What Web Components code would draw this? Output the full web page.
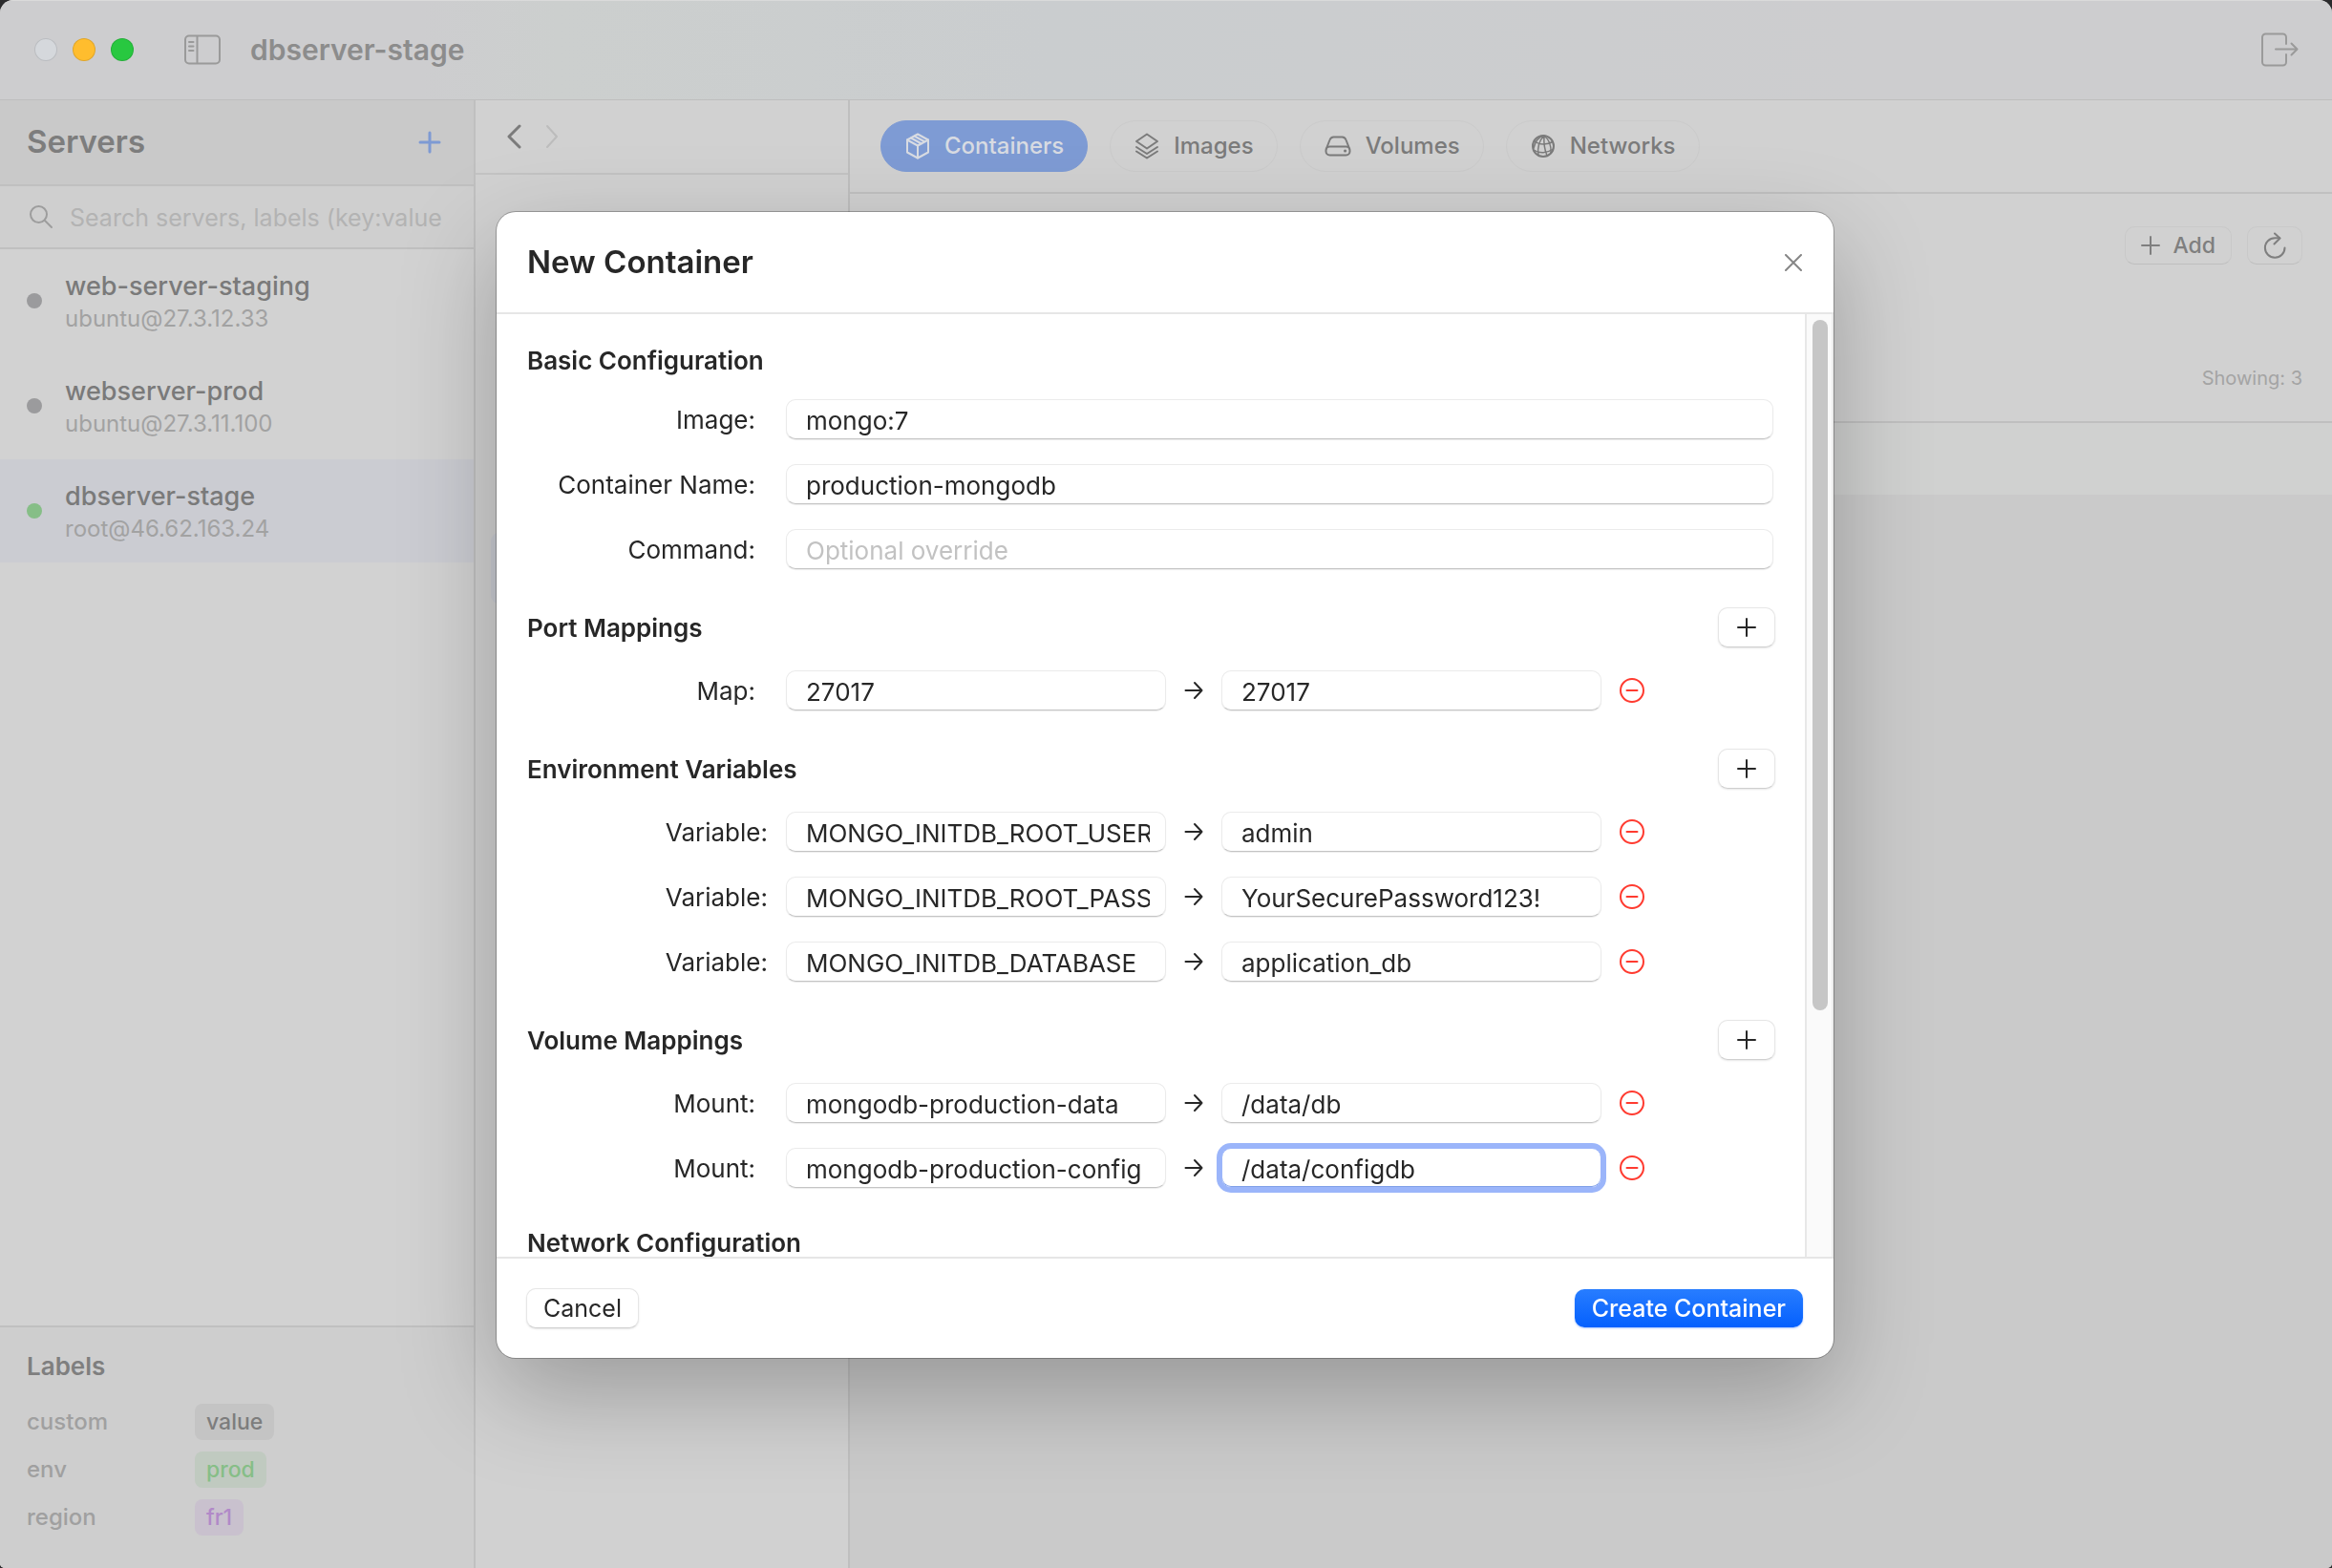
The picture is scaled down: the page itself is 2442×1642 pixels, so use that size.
<!DOCTYPE html>
<html lang="en">
<head>
<meta charset="utf-8">
<title>dbserver-stage</title>
<style>
  html, body { margin: 0; height: 100%; }
  body { background: #2b2b2d; font-family: Inter, "Noto Sans", sans-serif; font-size: 26px; line-height: 34px; color: #7d7d7d; overflow: hidden; }
</style>
</head>
<body>
<app-window></app-window>
<script>
const define = (name, html, init) => {
  const template = document.createElement('template');
  template.innerHTML = `<style>
    *, *::before, *::after { box-sizing: border-box; }
    button, input { font: inherit; color: inherit; margin: 0; }
    button { border: 0; background: none; padding: 0; display: inline-flex; align-items: center; justify-content: center; }
    h1, h2, h3, p, ul, dl, dd, dt { margin: 0; padding: 0; font: inherit; }
    a { color: inherit; text-decoration: none; }
    input { outline: none; }
  </style>` + html;
  customElements.define(name, class extends HTMLElement {
    constructor() {
      super();
      this.attachShadow({ mode: 'open' }).append(template.content.cloneNode(true));
    }
    connectedCallback() { if (init) init(this.shadowRoot, this); }
  });
};

/* Each icon: width, height, stroke width, markup */
const ICONS = {
  plus: [24, 24, 3, '<path d="M12 2v20M2 12h20"/>'],
  'plus-thin': [20, 20, 2, '<path d="M10 1v18M1 10h18"/>'],
  close: [18, 18, 2, '<path d="M1 1l16 16M17 1L1 17"/>'],
  sidebar: [40, 32, 2, '<rect x="2" y="1.500" width="36" height="29" rx="4"/><path d="M14.500 2v28M6 8h4.500M6 12.500h4.500M6 17h4.500"/>'],
  exit: [40, 36, 2, '<path d="M27 12V5a3.500 3.500 0 0 0-3.500-3.500h-18A3.500 3.500 0 0 0 2 5v26a3.500 3.500 0 0 0 3.500 3.500h18A3.500 3.500 0 0 0 27 31v-8"/><path d="M16 17.500h22M32.500 11.500l6 6-6 6"/>'],
  search: [26, 26, 2, '<circle cx="10.500" cy="10.500" r="8.500"/><path d="M17 17l7 7"/>'],
  back: [16, 26, 3, '<path d="M14 2L3 13l11 11"/>'],
  forward: [16, 26, 2, '<path d="M3 2l10 11L3 24"/>'],
  box: [26, 28, 2, '<path d="M13 1.500l11 6v13l-11 6-11-6v-13z"/><path d="M2 7.500l11 6 11-6M13 13.500v13M9.500 3.500l11 6M6 5.500l11 6"/>'],
  layers: [26, 28, 2, '<path d="M13 1.500l11 7.500-11 7.500L2 9z"/><path d="M2 15l11 7 11-7M2 19.500l11 7 11-7"/>'],
  drive: [28, 22, 2, '<path d="M1.800 14L5.500 4.500A4.500 4.500 0 0 1 9.500 1.500h9a4.500 4.500 0 0 1 4 3L26.200 14"/><rect x="1.500" y="11.500" width="25" height="9" rx="4"/><path d="M21.500 16h.1" stroke-width="3"/>'],
  globe: [26, 26, 2, '<circle cx="13" cy="13" r="11"/><g stroke-width="1.500"><path d="M14 2C9 7 6.500 13 8 22.500M14 2c-.500 7 .500 15 3 21M14 2c5 4 7.500 10 7 18M14 2C9 3 5 7 3 15"/><path d="M4 8c5 4 13 4 19 .500M3 17c6 4 14 3.500 20.500-1"/></g>'],
  refresh: [24, 28, 2, '<path d="M22.500 16.500A10.300 10.300 0 1 1 12.200 6.200h5"/><path d="M12 1.500l5.500 5-6 6"/>'],
  arrow: [20, 20, 2, '<path d="M1.500 10h17M11 2l7.500 8L11 18"/>'],
  remove: [28, 28, 2, '<circle cx="14" cy="14" r="12"/><path d="M8.500 14h11"/>']
};
define('app-icon', `<style>
  :host { display: inline-flex; flex: none; }
  svg { display: block; fill: none; stroke: currentColor; stroke-linecap: round; stroke-linejoin: round; }
</style><svg aria-hidden="true"></svg>`, (root, host) => {
  const [w, h, s, body] = ICONS[host.getAttribute('name')];
  const svg = root.querySelector('svg');
  svg.setAttribute('viewBox', `0 0 ${w} ${h}`);
  svg.setAttribute('width', w);
  svg.setAttribute('height', h);
  svg.setAttribute('stroke-width', s);
  svg.innerHTML = body;
});

define('title-bar', `<style>
  :host { display: flex; align-items: center; height: 105px; padding: 0 35px 2px 36px; flex: none;
    background: linear-gradient(90deg, #cdcdcf 18%, #cccfce 24%, #cacdcf 45%, #cdcdcf 80%);
    border-top: 1px solid #dadada; border-bottom: 1px solid #bebebe; color: #9a9a9a; box-sizing: border-box; }
  .lights { display: flex; gap: 16px; margin-right: 52px; }
  .lights button { width: 24px; height: 24px; border-radius: 50%; border: 1px solid rgba(0,0,0,.12); }
  .close { background: #d5d8dc; } .min { background: #ffbd2e; } .max { background: #28c840; }
  h1 { font-size: 30px; font-weight: 600; color: #8c8c8c; margin-left: 30px; flex: 1; }
</style>
<div class="lights"><button class="close" aria-label="Close window"></button><button class="min" aria-label="Minimise"></button><button class="max" aria-label="Zoom"></button></div>
<button aria-label="Toggle sidebar"><app-icon name="sidebar"></app-icon></button>
<h1>dbserver-stage</h1>
<button aria-label="Disconnect"><app-icon name="exit"></app-icon></button>`);

define('server-item', `<style>
  :host { display: block; }
  a { display: flex; align-items: center; height: 108px; padding-left: 28px; gap: 24px; }
  :host([selected]) a { background: #cbccd2; }
  i { width: 16px; height: 16px; border-radius: 50%; background: #9b9b9d; }
  :host([selected]) i { background: #86be87; }
  span { display: block; padding-top: 3px; }
  b { display: block; font-size: 27px; font-weight: 500; color: #7a7a7a; }
  small { display: block; font-size: 24px; color: #a2a2a2; }
</style>
<a href="#"><i></i><span><b><slot></slot></b><small><slot name="address"></slot></small></span></a>`);

define('label-row', `<style>
  :host { display: flex; align-items: center; height: 38px; font-size: 24px; font-weight: 500; color: #a0a0a0; }
  .key { width: 176px; }
  .tag { font-size: 23px; line-height: 38px; padding: 0 12px; border-radius: 8px; background: #c4c4c4; color: #7d7d7d; }
  :host([tone=green]) .tag { background: #c0cac0; color: #86be87; }
  :host([tone=purple]) .tag { background: #c9c1ce; color: #b189c8; }
</style>
<span class="key"><slot name="key"></slot></span><span class="tag"><slot></slot></span>`);

define('server-sidebar', `<style>
  :host { display: flex; flex-direction: column; width: 498px; flex: none; box-sizing: border-box; border-right: 2px solid #c0c0c0; background: #d2d2d2; }
  header { display: flex; align-items: center; justify-content: space-between; height: 90px; padding: 0 34px 0 28px; background: #c9c9c9; border-bottom: 2px solid #c0c0c0; }
  h2 { font-size: 33px; font-weight: 600; color: #7d7d7d; padding-bottom: 2px; }
  header button { color: #7e9ad3; }
  .search { display: flex; align-items: center; height: 66px; padding: 0 28px 0 30px; gap: 17px; background: #cfcfcf; border-bottom: 2px solid #c0c0c0; color: #9d9d9d; }
  .search input { flex: 1; min-width: 0; height: 40px; border: 0; padding: 2px 0 0; background: none; font-size: 25px; }
  .search input::placeholder { color: #b3b3b3; opacity: 1; }
  nav { flex: 1; display: flex; flex-direction: column; gap: 2px; }
  .labels { padding: 24px 28px 34px; background: #cecece; border-top: 2px solid #c0c0c0; display: flex; flex-direction: column; gap: 12px; }
  h3 { font-weight: 600; color: #7f7f7f; padding-bottom: 10px; }
</style>
<header><h2>Servers</h2><button aria-label="Add server"><app-icon name="plus"></app-icon></button></header>
<div class="search"><app-icon name="search"></app-icon><input type="text" aria-label="Search servers" placeholder="Search servers, labels (key:value"></div>
<nav>
  <server-item>web-server-staging<span slot="address">ubuntu@27.3.12.33</span></server-item>
  <server-item>webserver-prod<span slot="address">ubuntu@27.3.11.100</span></server-item>
  <server-item selected>dbserver-stage<span slot="address">root@46.62.163.24</span></server-item>
</nav>
<section class="labels">
  <h3>Labels</h3>
  <label-row><span slot="key">custom</span>value</label-row>
  <label-row tone="green"><span slot="key">env</span>prod</label-row>
  <label-row tone="purple"><span slot="key">region</span>fr1</label-row>
</section>`);

define('history-column', `<style>
  :host { display: flex; flex-direction: column; width: 392px; flex: none; box-sizing: border-box; background: #d1d1d1; border-right: 2px solid #bfbfbf; }
  header { display: flex; align-items: center; gap: 24px; height: 78px; padding: 0 32px; border-bottom: 2px solid #c3c3c3; color: #7b7b7b; }
  .next { color: #bcbcbc; }
  .current { margin: 374px 16px 0; height: 76px; border-radius: 10px; background: #c9cbd2; }
</style>
<header><button aria-label="Back"><app-icon name="back"></app-icon></button><button class="next" aria-label="Forward" disabled><app-icon name="forward"></app-icon></button></header>
<div class="current"></div>`);

define('tab-pill', `<style>
  :host { display: block; }
  button { height: 54px; padding: 0 24px 0 25px; gap: 15px; border: 1px solid #cbcbcb; border-radius: 27px; font-size: 24px; font-weight: 500; color: #7b7b7b; }
  :host([selected]) button { background: #7e9bd4; border-color: #7e9bd4; color: #d8dbe2; }
</style>
<button role="tab"><slot name="icon"></slot><span><slot></slot></span></button>`);

define('main-pane', `<style>
  :host { display: flex; flex-direction: column; flex: 1; min-width: 0; background: #cacaca; }
  .tabs { display: flex; align-items: center; gap: 23px; height: 98px; padding: 0 32px; background: #d1d1d1; border-bottom: 2px solid #c0c0c0; }
  .tools { display: flex; flex-direction: column; justify-content: space-between; align-items: flex-end; height: 240px; padding: 34px 31px 28px; background: #d1d1d1; border-bottom: 2px solid #bfbfbf; }
  .buttons { display: flex; gap: 16px; }
  .buttons button { height: 40px; padding: 0 16px; gap: 13px; border-radius: 10px; border: 1px solid #c9c9c9; border-bottom-color: #bebebe; color: #7f7f7f; font-size: 23px; font-weight: 500; }
  p { font-size: 20px; color: #a4a4a4; }
  .head { height: 75px; background: #d0d1d0; }
</style>
<div class="tabs" role="tablist">
  <tab-pill selected><app-icon slot="icon" name="box"></app-icon>Containers</tab-pill>
  <tab-pill><app-icon slot="icon" name="layers"></app-icon>Images</tab-pill>
  <tab-pill><app-icon slot="icon" name="drive"></app-icon>Volumes</tab-pill>
  <tab-pill><app-icon slot="icon" name="globe"></app-icon>Networks</tab-pill>
</div>
<div class="tools">
  <div class="buttons"><button><app-icon name="plus-thin"></app-icon>Add</button><button aria-label="Refresh"><app-icon name="refresh"></app-icon></button></div>
  <p>Showing: 3</p>
</div>
<div class="head"></div>`);

const FIELD = `
  :host { display: flex; align-items: center; height: 42px; }
  label { width: 239px; flex: none; margin-right: 32px; padding-top: 2px; text-align: right; }
  input { height: 42px; min-width: 0; padding: 2px 16px 0 20px; background: #fff; border: 1px solid #ebebeb; border-bottom-color: #c4c4c4; border-radius: 10px; box-shadow: 0 1px 1px rgba(0,0,0,.08); text-overflow: clip; }
  input::placeholder { color: #c2c2c2; opacity: 1; }`;

define('text-field', `<style>${FIELD}
  input { flex: 1; margin-right: 2px; }
</style>
<label for="field"></label><input id="field" type="text">`, (root, host) => {
  root.querySelector('label').textContent = host.getAttribute('label');
  const input = root.querySelector('input');
  input.value = host.getAttribute('value') || '';
  input.placeholder = host.getAttribute('placeholder') || '';
});

define('mapping-row', `<style>${FIELD}
  :host([wide]) label { width: 252px; margin-right: 19px; }
  input { flex: 0 1 398px; }
  .arrow { margin: 0 19px; }
  :host([focused]) #target { border-color: #9bb5fa; box-shadow: 0 0 0 5px #9bb5fa, inset 0 -1px 0 #7f9fe8; }
  button { color: #ff3b30; margin-left: 18px; }
</style>
<label for="source"></label><input id="source" type="text"><app-icon class="arrow" name="arrow"></app-icon><input id="target" type="text" aria-label="Target"><button aria-label="Remove"><app-icon name="remove"></app-icon></button>`, (root, host) => {
  root.querySelector('label').textContent = host.getAttribute('label');
  root.querySelector('#source').value = host.getAttribute('from');
  root.querySelector('#target').value = host.getAttribute('to');
});

define('push-button', `<style>
  :host { display: block; font-size: 25px; }
  button { height: 42px; padding: 0 17px; border-radius: 10px; background: #fff; border: 1px solid #e6e6e6; border-bottom-color: #cfcfcf; box-shadow: 0 1px 2px rgba(0,0,0,.1); color: #272727; }
  :host([primary]) button { height: 40px; padding: 0 18px; color: #fff; font-weight: 500; border: 0; background: linear-gradient(#287dff, #0460fe); box-shadow: 0 1px 2px rgba(0,90,255,.35); }
  :host([icon]) button { width: 60px; padding: 0; }
</style><button><slot></slot></button>`, (root, host) => {
  if (host.title) root.querySelector('button').setAttribute('aria-label', host.title);
});

define('form-section', `<style>
  :host { display: block; }
  header { display: flex; align-items: center; justify-content: space-between; min-height: 34px; margin-bottom: 24px; }
  header:has(h3) { max-height: 42px; }
  h3 { font-weight: 600; line-height: 32px; padding-top: 2px; }
  .rows { display: flex; flex-direction: column; gap: 26px; }
</style>
<header><h3><slot name="heading"></slot></h3><slot name="action"></slot></header>
<div class="rows"><slot></slot></div>`);

define('container-dialog', `<style>
  :host { position: fixed; inset: 0; display: grid; place-items: center; padding: 2px 2px 0 0; box-sizing: border-box; color: #272727; }
  .sheet { display: flex; flex-direction: column; width: min(1400px, 92vw); height: min(1200px, 92vh); background: #fff; border-radius: 20px; overflow: hidden;
    box-shadow: 0 0 0 1px rgba(0,0,0,.26), 0 36px 100px rgba(0,0,0,.26); }
  .top { display: flex; align-items: center; justify-content: space-between; height: 107px; flex: none; padding: 0 33px 0 32px; border-bottom: 2px solid #e6e6e6; }
  h2 { font-size: 33px; font-weight: 600; padding-bottom: 2px; }
  .top button { color: #868686; }
  .middle { flex: 1; min-height: 0; display: flex; }
  .form { flex: 1; min-width: 0; overflow: hidden; padding: 31px 31px 0 32px; display: flex; flex-direction: column; gap: 40px; }
  form-section { flex: none; }
  .track { width: 30px; background: #fafafa; border-left: 2px solid #e7e7e7; border-right: 2px solid #ededed; padding: 6px 4px 0 6px; }
  .thumb { width: 16px; height: 723px; border-radius: 8px; background: #c6c6c6; }
  .bottom { display: flex; align-items: center; justify-content: space-between; height: 106px; flex: none; padding: 0 32px 0 31px; border-top: 2px solid #e6e6e6; }
</style>
<div class="sheet" role="dialog" aria-labelledby="title">
  <div class="top"><h2 id="title">New Container</h2><button aria-label="Close"><app-icon name="close"></app-icon></button></div>
  <div class="middle">
    <div class="form">
      <form-section><span slot="heading">Basic Configuration</span>
        <text-field label="Image:" value="mongo:7"></text-field>
        <text-field label="Container Name:" value="production-mongodb"></text-field>
        <text-field label="Command:" placeholder="Optional override"></text-field>
      </form-section>
      <form-section><span slot="heading">Port Mappings</span><push-button slot="action" icon title="Add port"><app-icon name="plus-thin"></app-icon></push-button>
        <mapping-row label="Map:" from="27017" to="27017"></mapping-row>
      </form-section>
      <form-section><span slot="heading">Environment Variables</span><push-button slot="action" icon title="Add variable"><app-icon name="plus-thin"></app-icon></push-button>
        <mapping-row wide label="Variable:" from="MONGO_INITDB_ROOT_USERNAME" to="admin"></mapping-row>
        <mapping-row wide label="Variable:" from="MONGO_INITDB_ROOT_PASSWORD" to="YourSecurePassword123!"></mapping-row>
        <mapping-row wide label="Variable:" from="MONGO_INITDB_DATABASE" to="application_db"></mapping-row>
      </form-section>
      <form-section><span slot="heading">Volume Mappings</span><push-button slot="action" icon title="Add volume"><app-icon name="plus-thin"></app-icon></push-button>
        <mapping-row label="Mount:" from="mongodb-production-data" to="/data/db"></mapping-row>
        <mapping-row focused label="Mount:" from="mongodb-production-config" to="/data/configdb"></mapping-row>
      </form-section>
      <form-section><span slot="heading">Network Configuration</span></form-section>
    </div>
    <div class="track"><div class="thumb"></div></div>
  </div>
  <div class="bottom"><push-button>Cancel</push-button><push-button primary>Create Container</push-button></div>
</div>`);

define('app-window', `<style>
  :host { display: flex; flex-direction: column; height: 100vh; overflow: hidden; border-radius: 14px 14px 5px 5px; background: #d1d1d1; }
  main { flex: 1; min-height: 0; display: flex; }
</style>
<title-bar></title-bar>
<main><server-sidebar></server-sidebar><history-column></history-column><main-pane></main-pane></main>
<container-dialog></container-dialog>`);
</script>
</body>
</html>
